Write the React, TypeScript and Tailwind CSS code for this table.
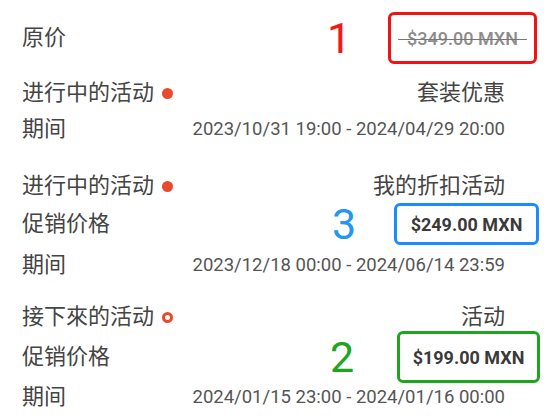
import type { ReactNode } from "react";

type Dot = "solid" | "ring" | undefined;

function StatusDot({ kind }: { kind: Dot }) {
  if (!kind) return null;
  return kind === "solid" ? (
    <span className="ml-[8px] inline-block w-[11px] h-[11px] rounded-full bg-[#ea4a2c]" />
  ) : (
    <span className="ml-[8px] inline-block w-[11px] h-[11px] rounded-full border-[3px] border-[#ea4a2c]" />
  );
}

function Row({
  label,
  dot,
  children,
  className,
}: {
  label: string;
  dot?: Dot;
  children?: ReactNode;
  className: string;
}) {
  return (
    <div className={`flex items-center ${className}`}>
      <div className="flex-1 flex items-center text-[22px] leading-none text-[#444]">
        <span>{label}</span>
        <StatusDot kind={dot} />
      </div>
      {children}
    </div>
  );
}

function RightText({ children }: { children: ReactNode }) {
  return <span className="mr-[49px] text-[22px] leading-none text-[#444]">{children}</span>;
}

function Period({ children }: { children: ReactNode }) {
  return <span className="mr-[49px] text-[18.5px] leading-none text-[#555]">{children}</span>;
}

export default function App() {
  return (
    <div className="w-[554px] h-[418px] bg-white overflow-hidden pl-[22px] pt-[12px] font-['Roboto','Noto_Sans_CJK_SC',sans-serif]">
      {/* 原价 */}
      <Row label="原价" className="h-[52px]">
        <span className="w-[20px] mr-[41px] text-center text-[43px] leading-none text-[#f51616]">1</span>
        <div className="mr-[17px] w-[149px] h-[52px] shrink-0 flex items-center justify-center rounded-[6px] border-[3.5px] border-[#f01313]">
          <span className="text-[18px] font-medium text-[#8c8c8c] line-through decoration-[#777] decoration-1">
            {"\u00a0\u00a0$349.00 MXN\u00a0\u00a0"}
          </span>
        </div>
      </Row>

      {/* 套装优惠 */}
      <Row label="进行中的活动" dot="solid" className="h-[36px] mt-[11px]">
        <RightText>套装优惠</RightText>
      </Row>
      <Row label="期间" className="h-[36px]">
        <Period>2023/10/31 19:00 - 2024/04/29 20:00</Period>
      </Row>

      {/* 我的折扣活动 */}
      <Row label="进行中的活动" dot="solid" className="h-[36px] mt-[21px]">
        <RightText>我的折扣活动</RightText>
      </Row>
      <Row label="促销价格" className="h-[40px]">
        <span className="w-[20px] mr-[42px] text-center text-[43px] leading-none text-[#2196f3]">3</span>
        <div className="mr-[15px] w-[145px] h-[42px] shrink-0 flex items-center justify-center rounded-[6px] border-[3.5px] border-[#1a8cff]">
          <span className="text-[18px] font-bold text-[#3a3a3a]">$249.00 MXN</span>
        </div>
      </Row>
      <Row label="期间" className="h-[36px] mt-[3px]">
        <Period>2023/12/18 00:00 - 2024/06/14 23:59</Period>
      </Row>

      {/* 活动 */}
      <Row label="接下來的活动" dot="ring" className="h-[36px] mt-[16px]">
        <RightText>活动</RightText>
      </Row>
      <Row label="促销价格" className="h-[40px] mt-[2px]">
        <span className="w-[20px] mr-[47px] text-center text-[43px] leading-none text-[#1fa61f]">2</span>
        <div className="mr-[14px] w-[143px] h-[52px] shrink-0 flex items-center justify-center rounded-[6px] border-[3.5px] border-[#1ea51e]">
          <span className="text-[18px] font-bold text-[#3a3a3a]">$199.00 MXN</span>
        </div>
      </Row>
      <Row label="期间" className="h-[36px] mt-[2px]">
        <Period>2024/01/15 23:00 - 2024/01/16 00:00</Period>
      </Row>
    </div>
  );
}
